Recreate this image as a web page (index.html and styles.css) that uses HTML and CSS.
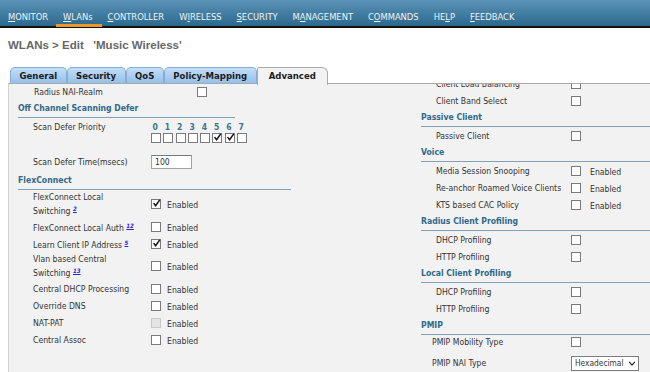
FILE: index.html
```html
<!DOCTYPE html>
<html>
<head>
<meta charset="utf-8">
<title>WLANs &gt; Edit</title>
<link rel="stylesheet" href="styles.css">
</head>
<body>
<div class="topnav">
  <a class="navitem"><u>M</u>ONITOR</a>
  <a class="navitem active"><u>W</u>LANs</a>
  <a class="navitem"><u>C</u>ONTROLLER</a>
  <a class="navitem">W<u>I</u>RELESS</a>
  <a class="navitem"><u>S</u>ECURITY</a>
  <a class="navitem">M<u>A</u>NAGEMENT</a>
  <a class="navitem">C<u>O</u>MMANDS</a>
  <a class="navitem">HE<u>L</u>P</a>
  <a class="navitem"><u>F</u>EEDBACK</a>
</div>

<h1 class="pagetitle">WLANs &gt; Edit &nbsp;&nbsp;'Music Wireless'</h1>

<ul class="tabs">
  <li class="tab">General</li>
  <li class="tab">Security</li>
  <li class="tab">QoS</li>
  <li class="tab">Policy-Mapping</li>
  <li class="tab current">Advanced</li>
</ul>

<div class="panel">
  <div class="leftcol">
    <div class="row h16"><span class="lbl wide">Radius NAI-Realm</span><span class="cb"></span></div>

    <div class="sechead ocs">Off Channel Scanning Defer</div>
    <div class="row prio-row">
      <span class="lbl">Scan Defer Priority</span>
      <div class="prio">
        <span class="d">0</span><span class="d">1</span><span class="d">2</span><span class="d">3</span>
        <span class="d">4</span><span class="d">5</span><span class="d">6</span><span class="d">7</span>
        <span class="cb"></span><span class="cb"></span><span class="cb"></span><span class="cb"></span>
        <span class="cb"></span>
        <span class="cb"><svg viewBox="0 0 10 10"><path d="M1.8 4.6 L4 7.4 L8.6 1" /></svg></span>
        <span class="cb"><svg viewBox="0 0 10 10"><path d="M1.8 4.6 L4 7.4 L8.6 1" /></svg></span>
        <span class="cb"></span>
      </div>
    </div>
    <div class="row h23"><span class="lbl">Scan Defer Time(msecs)</span><span class="textbox">100</span></div>

    <div class="sechead flex">FlexConnect</div>
    <div class="row tall">
      <span class="lbl">FlexConnect Local<br>Switching <a class="fn">2</a></span>
      <span class="cb"><svg viewBox="0 0 10 10"><path d="M1.8 4.6 L4 7.4 L8.6 1" /></svg></span><span class="en">Enabled</span>
    </div>
    <div class="row"><span class="lbl">FlexConnect Local Auth <a class="fn">12</a></span><span class="cb"></span><span class="en">Enabled</span></div>
    <div class="row"><span class="lbl">Learn Client IP Address <a class="fn">5</a></span><span class="cb"><svg viewBox="0 0 10 10"><path d="M1.8 4.6 L4 7.4 L8.6 1" /></svg></span><span class="en">Enabled</span></div>
    <div class="row tall">
      <span class="lbl">Vlan based Central<br>Switching <a class="fn">13</a></span>
      <span class="cb"></span><span class="en">Enabled</span>
    </div>
    <div class="row"><span class="lbl">Central DHCP Processing</span><span class="cb"></span><span class="en">Enabled</span></div>
    <div class="row"><span class="lbl">Override DNS</span><span class="cb"></span><span class="en">Enabled</span></div>
    <div class="row"><span class="lbl">NAT-PAT</span><span class="cb off"></span><span class="en">Enabled</span></div>
    <div class="row"><span class="lbl">Central Assoc</span><span class="cb"></span><span class="en">Enabled</span></div>
  </div>

  <div class="rightcol">
    <div class="row"><span class="lbl">Client Load Balancing</span><span class="cb"></span></div>
    <div class="row"><span class="lbl">Client Band Select</span><span class="cb"></span></div>

    <div class="sechead">Passive Client</div>
    <div class="row"><span class="lbl">Passive Client</span><span class="cb"></span></div>

    <div class="sechead">Voice</div>
    <div class="row"><span class="lbl">Media Session Snooping</span><span class="cb"></span><span class="en">Enabled</span></div>
    <div class="row"><span class="lbl">Re-anchor Roamed Voice Clients</span><span class="cb"></span><span class="en">Enabled</span></div>
    <div class="row"><span class="lbl">KTS based CAC Policy</span><span class="cb"></span><span class="en">Enabled</span></div>

    <div class="sechead">Radius Client Profiling</div>
    <div class="row"><span class="lbl">DHCP Profiling</span><span class="cb"></span></div>
    <div class="row"><span class="lbl">HTTP Profiling</span><span class="cb"></span></div>

    <div class="sechead">Local Client Profiling</div>
    <div class="row"><span class="lbl">DHCP Profiling</span><span class="cb"></span></div>
    <div class="row"><span class="lbl">HTTP Profiling</span><span class="cb"></span></div>

    <div class="sechead">PMIP</div>
    <div class="row h14"><span class="lbl pmip">PMIP Mobility Type</span><span class="cb"></span></div>
    <div class="row tall">
      <span class="lbl pmip">PMIP NAI Type</span>
      <span class="select">Hexadecimal<svg viewBox="0 0 10 8"><path d="M1.5 2 L5 6 L8.5 2" /></svg></span>
    </div>
  </div>
</div>
</body>
</html>
```

FILE: styles.css
```css
/* Controller web UI, WLAN edit page */
body {
    margin: 0;
    font-family: "DejaVu Sans Condensed", "DejaVu Sans", sans-serif;
    font-stretch: condensed;
    font-size: 8.6px;
    color: #333;
    background: #fff;
}

/* top menu bar */
.topnav {
    display: flex;
    gap: 15px;
    height: 17px;
    padding: 9px 0 0 8px;
    background: linear-gradient(#5a94b8, #2c698d);
    border-bottom: 2px solid #111;
}
.navitem {
    position: relative;
    color: #eef3f6;
    font-size: 9.3px;
    line-height: 16px;
    text-decoration: none;
}
.navitem.active::after {
    content: "";
    position: absolute;
    left: -7px;
    right: -9px;
    bottom: -1px;
    height: 3px;
    background: #f0962a;
}

.pagetitle {
    margin: 10px 0 0 8px;
    font: bold 11.5px/14px "Liberation Sans", Arial, sans-serif;
    color: #676767;
}

/* tab strip */
.tabs {
    display: flex;
    list-style: none;
    margin: 15px 0 0 10px;
    padding: 0;
    height: 16px;
}
.tab {
    padding: 0 8.5px;
    line-height: 16px;
    font-size: 9.5px;
    font-weight: bold;
    color: #1b1b1b;
    background: linear-gradient(#c4def7, #93c0ec);
    border: 1px solid #86add6;
    border-bottom: 0;
    border-radius: 5px 5px 0 0;
}
.tab.current {
    position: relative;
    z-index: 1;
    height: 17px;
    padding: 0 11px;
    background: #f2f2f2;
    border-color: #ababab;
    border-radius: 2px 6px 0 0;
}

/* grey content box */
.panel {
    display: flex;
    margin-left: 8px;
    height: 288px;
    overflow: hidden;
    background: #f2f2f2;
    border-top: 1px solid #a9a9a9;
    border-left: 1px solid #d2d2d2;
}
.leftcol {
    flex: none;
    width: 412px;
}
.rightcol {
    flex: 1;
    margin-top: -9px;
}

.row {
    display: flex;
    align-items: center;
    height: 17px;
}
.row.h14 { height: 14px; }
.row.h16 { height: 16px; }
.row.h23 { height: 23px; }
.row.tall { height: 28px; }

.lbl {
    flex: none;
    box-sizing: border-box;
    width: 142px;
    padding-left: 24px;
    line-height: 12px;
}
.lbl.wide { width: 188px; padding-left: 25px; }
.rightcol .lbl { width: 150px; padding-left: 15px; }
.rightcol .lbl.pmip { padding-left: 11px; }

.sechead {
    padding: 2px 0 3px;
    line-height: 12px;
    font-weight: bold;
    color: #30688a;
    border-bottom: 1px solid #86a0b4;
}
.leftcol .sechead { margin-left: 9px; }
.sechead.ocs { width: 217px; }
.sechead.flex { width: 273px; padding-top: 1px; }

/* checkboxes */
.cb {
    flex: none;
    box-sizing: border-box;
    width: 10px;
    height: 10px;
    background: #fff;
    border: 1px solid #7b7b7b;
}
.cb.off {
    background: #e4e4e4;
    border-color: #c9c9c9;
}
.cb svg {
    display: block;
    width: 9px;
    height: 9px;
    margin: -1px 0 0 0;
    overflow: visible;
}
.cb svg path {
    fill: none;
    stroke: #111;
    stroke-width: 1.7;
}
.en { margin-left: 6px; padding-top: 2px; }
.rightcol .en { margin-left: 9px; }

.fn {
    font-size: 6px;
    font-weight: bold;
    font-style: italic;
    color: #2424c8;
    text-decoration: underline;
    vertical-align: 3px;
}

/* scan defer priority matrix */
.row.prio-row {
    align-items: flex-start;
    height: 32px;
    padding-top: 3px;
    box-sizing: border-box;
}
.prio {
    display: grid;
    grid-template-columns: repeat(8, 12.3px);
}
.prio .d {
    padding-left: 1.5px;
    line-height: 12px;
    font-weight: bold;
    color: #41758f;
}

.textbox {
    box-sizing: border-box;
    width: 41px;
    height: 14px;
    padding-left: 3px;
    line-height: 12px;
    background: #fff;
    border: 1px solid #a3a3a3;
    border-top-color: #7a7a7a;
}

.select {
    display: flex;
    align-items: center;
    justify-content: space-between;
    box-sizing: border-box;
    width: 68px;
    height: 15px;
    padding: 0 2px 0 3px;
    background: #fff;
    border: 1px solid #7d7d7d;
    font-size: 8.3px;
}
.select svg {
    width: 8px;
    height: 7px;
}
.select svg path {
    fill: none;
    stroke: #222;
    stroke-width: 1.5;
}
```
